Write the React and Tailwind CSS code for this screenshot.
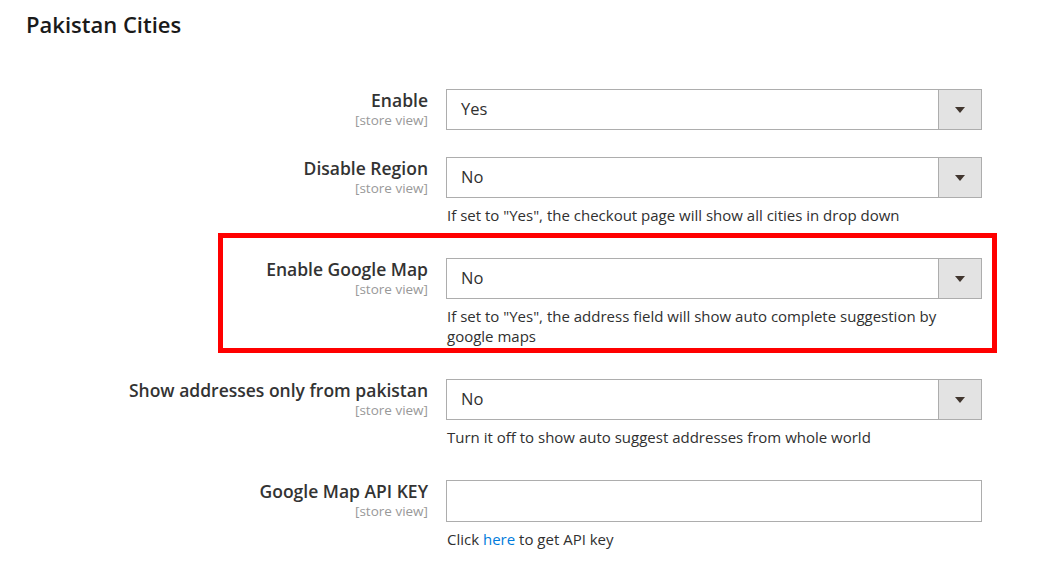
import React from "react";

const font = { fontFamily: '"Open Sans", "Liberation Sans", sans-serif' };

function Arrow() {
  return (
    <svg width="10" height="6" viewBox="0 0 10 6" className="block">
      <path d="M0 0 H10 L5 6 Z" fill="#41362f" />
    </svg>
  );
}

function Select({ value }) {
  return (
    <div className="flex h-[41px] w-[536px] border border-[#adadad] bg-white">
      <div className="flex flex-1 items-center pl-[14px] text-[16.5px] text-[#303030]">{value}</div>
      <div className="flex w-[43px] items-center justify-center border-l border-[#adadad] bg-[#e3e3e3]">
        <Arrow />
      </div>
    </div>
  );
}

function Row({ label, children, note }) {
  return (
    <div className="flex pb-[27px]">
      <div className="w-[428px] text-right">
        <div className="text-[17.5px] font-semibold leading-[22px] text-[#333333]">{label}</div>
        <div className="text-[13.5px] leading-[18px] text-[#999999]">[store view]</div>
      </div>
      <div className="ml-[18px] w-[536px]">
        {children}
        {note && (
          <div className="mb-[6px] mt-[7px] pl-[1px] text-[15px] leading-[20px] text-[#303030]">{note}</div>
        )}
      </div>
    </div>
  );
}

export default function App() {
  return (
    <div className="h-[581px] w-[1040px] bg-white" style={font}>
      <div className="pl-[26px] pt-[9px] text-[22px] font-semibold leading-[30px] text-[#1a1a1a]">
        Pakistan Cities
      </div>
      <div className="mt-[50px]">
        <Row label="Enable">
          <Select value="Yes" />
        </Row>
        <Row
          label="Disable Region"
          note={'If set to "Yes", the checkout page will show all cities in drop down'}
        >
          <Select value="No" />
        </Row>
        <div className="relative">
          <div className="pointer-events-none absolute left-[218px] top-[-25px] h-[120px] w-[779px] border-[5px] border-[#ff0000]" />
          <Row
            label="Enable Google Map"
            note={'If set to "Yes", the address field will show auto complete suggestion by google maps'}
          >
            <Select value="No" />
          </Row>
        </div>
        <Row
          label="Show addresses only from pakistan"
          note="Turn it off to show auto suggest addresses from whole world"
        >
          <Select value="No" />
        </Row>
        <Row
          label="Google Map API KEY"
          note={
            <span>
              Click <span className="text-[#007bdb]">here</span> to get API key
            </span>
          }
        >
          <div className="h-[42px] w-[536px] border border-[#adadad] bg-white" />
        </Row>
      </div>
    </div>
  );
}
